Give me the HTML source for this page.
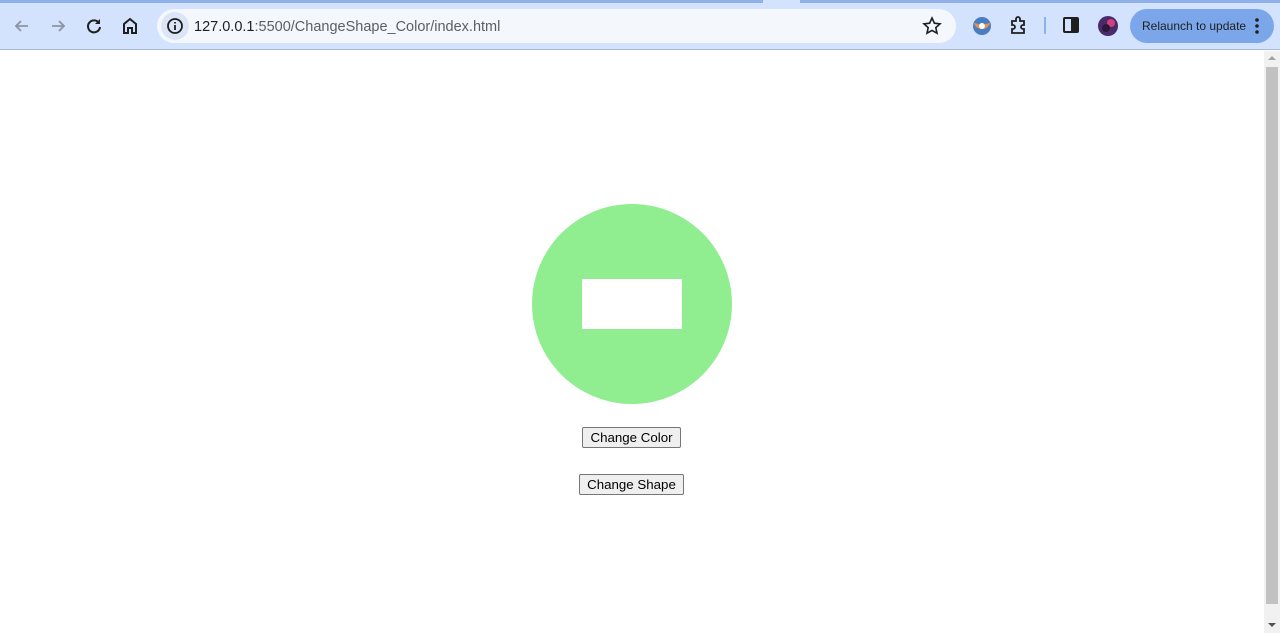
<!DOCTYPE html>
<html><head><meta charset="utf-8"><style>
*{margin:0;padding:0;box-sizing:border-box}
body{width:1280px;height:633px;overflow:hidden;background:#fff;font-family:"Liberation Sans",sans-serif;position:relative}
.top{position:absolute;left:0;top:0;width:1280px;height:50px;background:#d3e3fd;border-bottom:1px solid #a8b8d0}
.strip{position:absolute;top:0;height:3px;background:#8fb0e8}
.url{position:absolute;left:157px;top:9px;width:799px;height:34px;border-radius:17px;background:#f4f8fd}
.info{position:absolute;left:161px;top:12px;width:28px;height:28px;border-radius:50%;background:#dbe5f5}
.urltext{position:absolute;left:194px;top:19px;font-size:14.5px;color:#1f1f1f}
.urltext span{color:#5a5f66}
.relaunch{position:absolute;left:1130px;top:9px;width:144px;height:34px;border-radius:17px;background:#7ba7ea;font-size:12px;color:#1f1f1f;padding:10px 0 0 12px}
svg{position:absolute}
.circle{position:absolute;left:532px;top:204px;width:200px;height:200px;border-radius:50%;background:#90ee90}
.rect{position:absolute;left:582px;top:279px;width:100px;height:50px;background:#fff}
button{position:absolute;height:21px;font-family:"Liberation Sans",sans-serif;font-size:13.3px;background:#efefef;border:1px solid #767676;border-radius:2px;color:#000;padding:0}
.sb{position:absolute;left:1264px;top:51px;width:16px;height:582px;background:#f1f1f1}
.thumb{position:absolute;left:1266px;top:67px;width:12px;height:537px;background:#c1c1c1}
</style></head><body>
<div class="top">
<div class="strip" style="left:0;width:763px"></div>
<div class="strip" style="left:800px;width:480px"></div>
<svg style="left:12px;top:16px" width="20" height="20" viewBox="0 0 20 20"><path d="M16 10H4M9 5l-5 5 5 5" stroke="#8a94a6" stroke-width="1.8" fill="none"/></svg>
<svg style="left:48px;top:16px" width="20" height="20" viewBox="0 0 20 20"><path d="M4 10h12M11 5l5 5-5 5" stroke="#8a94a6" stroke-width="1.8" fill="none"/></svg>
<svg style="left:84px;top:16px" width="20" height="20" viewBox="0 0 20 20"><path d="M15 7a6 6 0 1 0 1 4" stroke="#1f1f1f" stroke-width="2" fill="none"/><path d="M16 3v5h-5z" fill="#1f1f1f"/></svg>
<svg style="left:120px;top:16px" width="20" height="20" viewBox="0 0 20 20"><path d="M4 17V8l6-5 6 5v9h-4v-5H8v5z" stroke="#1f1f1f" stroke-width="2" fill="none"/></svg>
<div class="url"></div><div class="info"></div>
<svg style="left:166px;top:17px" width="18" height="18" viewBox="0 0 18 18"><circle cx="9" cy="9" r="7" stroke="#1f1f1f" stroke-width="1.8" fill="none"/><path d="M9 8v5M9 5v1.5" stroke="#1f1f1f" stroke-width="1.8"/></svg>
<div class="urltext">127.0.0.1<span>:5500/ChangeShape_Color/index.html</span></div>
<svg style="left:922px;top:16px" width="20" height="20" viewBox="0 0 20 20"><path d="M10 2l2.4 5.2 5.6.6-4.2 3.8 1.2 5.6L10 14.4 5 17.2l1.2-5.6L2 7.8l5.6-.6z" stroke="#1f1f1f" stroke-width="1.6" fill="none"/></svg>
<svg style="left:972px;top:16px" width="20" height="20" viewBox="0 0 20 20"><circle cx="10" cy="10" r="9" fill="#4a7cc4"/><path d="M2 7c3 0 5 2 8 2s5-2 8-2c-1 4-4 6-8 6s-7-2-8-6z" fill="#e8914a"/><circle cx="10" cy="10" r="3" fill="#fff"/></svg>
<svg style="left:1009px;top:15px" width="20" height="20" viewBox="0 0 20 20"><path d="M3 6h4V4a2 2 0 0 1 4 0v2h4v4h-1a2 2 0 0 0 0 4h1v4H3v-4h1a2 2 0 0 0 0-4H3z" stroke="#1f1f1f" stroke-width="1.8" fill="none"/></svg>
<div style="position:absolute;left:1044px;top:17px;width:2px;height:17px;background:#8fb0e8"></div>
<svg style="left:1063px;top:17px" width="16" height="16" viewBox="0 0 16 16"><rect x="1" y="1" width="14" height="14" rx="1" stroke="#1f1f1f" stroke-width="2" fill="none"/><rect x="8" y="1" width="7" height="14" fill="#1f1f1f"/></svg>
<svg style="left:1097px;top:15px" width="22" height="22" viewBox="0 0 22 22"><circle cx="11" cy="11" r="10" fill="#4a2a6a"/><circle cx="14" cy="8" r="4" fill="#d0407a"/><circle cx="9" cy="13" r="4" fill="#2a1a3a"/></svg>
<div class="relaunch">Relaunch to update</div>
<svg style="left:1254px;top:17px" width="6" height="18" viewBox="0 0 6 18"><circle cx="3" cy="3" r="1.8" fill="#1f1f1f"/><circle cx="3" cy="9" r="1.8" fill="#1f1f1f"/><circle cx="3" cy="15" r="1.8" fill="#1f1f1f"/></svg>
</div>
<div class="circle"></div><div class="rect"></div>
<button style="left:582px;top:427px;width:99px">Change Color</button>
<button style="left:579px;top:474px;width:105px">Change Shape</button>
<div class="sb"></div><div class="thumb"></div>
<svg style="left:1266px;top:54px" width="12" height="8"><path d="M2 6l4-4 4 4z" fill="#a3a3a3"/></svg>
<svg style="left:1266px;top:621px" width="12" height="8"><path d="M2 2l4 4 4-4z" fill="#505050"/></svg>
</body></html>
